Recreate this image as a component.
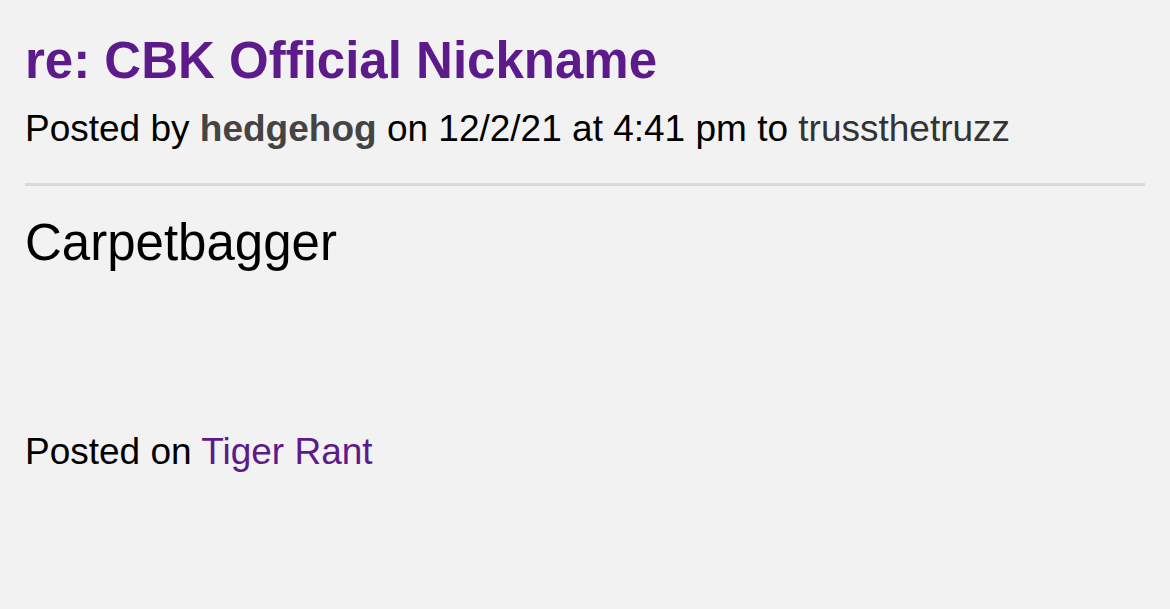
export default function App() {
  return (
    <div className="min-h-screen bg-[#f2f2f2] px-[25px] pt-[31px] font-['Liberation_Sans',Arial,sans-serif] text-black">
      <h1 className="text-[51px] leading-[60px] font-bold text-[#5d1a8b]">re: CBK Official Nickname</h1>
      <div className="mt-[16px] text-[37px] leading-[44px]">
        Posted by <span className="font-bold text-[#444]">hedgehog</span> on 12/2/21 at 4:41 pm to{' '}
        <span className="text-[#333]">trussthetruzz</span>
      </div>
      <div className="mt-[32px] h-[3px] bg-[#d9d9d9]" />
      <div className="mt-[27px] text-[51px] leading-[60px]">Carpetbagger</div>
      <div className="mt-[157px] text-[37px] leading-[44px]">
        Posted on <a className="text-[#5d1a8b]">Tiger Rant</a>
      </div>
    </div>
  );
}
